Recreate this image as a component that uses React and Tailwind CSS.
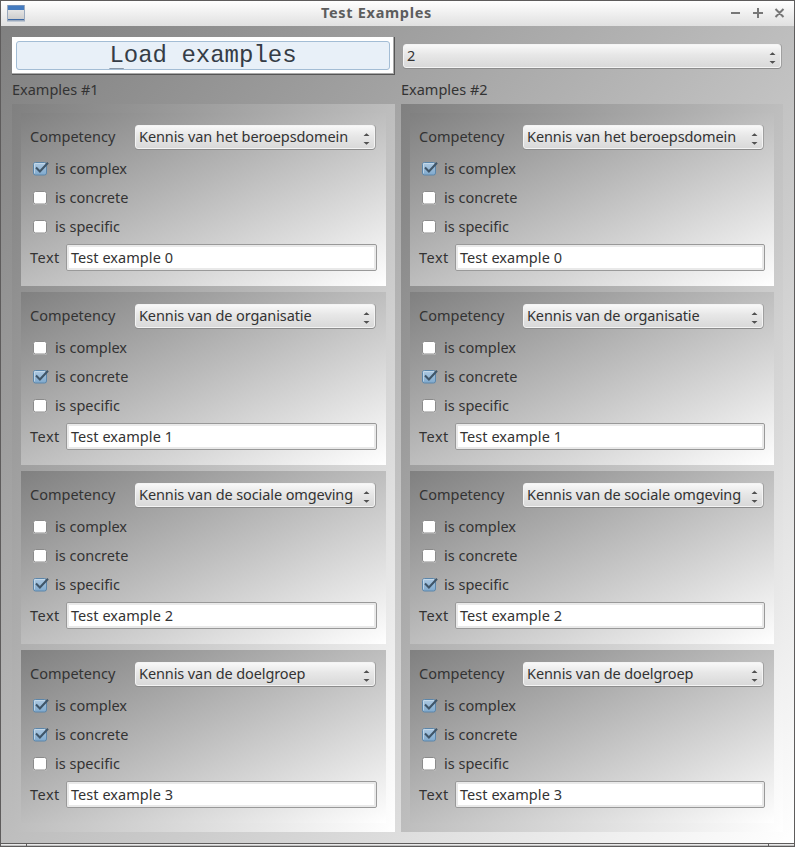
import React from "react";

const EXAMPLES = [
  { competency: "Kennis van het beroepsdomein", on: [true, false, false], spacing: "tracking-[-0.09px]" },
  { competency: "Kennis van de organisatie", on: [false, true, false], spacing: "tracking-[-0.11px]" },
  { competency: "Kennis van de sociale omgeving", on: [false, false, true], spacing: "tracking-[-0.1px]" },
  { competency: "Kennis van de doelgroep", on: [true, true, false], spacing: "tracking-[-0.1px]" },
];

function Arrows() {
  return (
    <svg width="7" height="12" viewBox="0 0 7 12" className="shrink-0">
      <path d="M0.5 3 3.5 0.2 6.5 3Z M0.5 9 3.5 11.8 6.5 9Z" fill="#505050" />
    </svg>
  );
}

function Select({ children, className }) {
  return (
    <div
      className={`flex h-6 items-center justify-between rounded-[3px] border border-[#f4f4f4] bg-linear-to-b from-[#f8f8f8] via-[#e7e7e7] via-45% to-[#d9d9d9] pl-[3px] pr-1 shadow-[0_1px_0_#8c8c8c,1px_0_0_#a0a0a0] ${className}`}
    >
      <span className="whitespace-nowrap pb-[2px]">{children}</span>
      <span className="mt-[4px] flex">
        <Arrows />
      </span>
    </div>
  );
}

function Check({ on }) {
  return (
    <svg width="18" height="16" viewBox="0 0 18 16" className="shrink-0">
      <defs>
        <linearGradient id="tick-fill" x1="0" y1="0" x2="0" y2="1">
          <stop offset="0" stopColor="#afcae2" />
          <stop offset="1" stopColor="#7fa9cd" />
        </linearGradient>
      </defs>
      {on ? (
        <>
          <rect x="1.5" y="1.5" width="13" height="12.5" rx="2" fill="url(#tick-fill)" stroke="#5c86aa" />
          <path d="M2.5 12.5V2.5H13" fill="none" stroke="#c9dceb" strokeWidth="0.8" />
          <path d="M4 6.6 7.9 10.4 16 1.8" fill="none" stroke="#3f5568" strokeWidth="2.1" />
        </>
      ) : (
        <>
          <rect x="1" y="2" width="14" height="13" rx="2" fill="#c4c4c4" />
          <rect x="1.5" y="1.5" width="13" height="12.5" rx="2" fill="#fff" stroke="#8b8b8b" />
        </>
      )}
    </svg>
  );
}

function Card({ example, index, selectWidth, inputWidth }) {
  return (
    <div className="h-[173px] bg-linear-to-br from-[#808080] to-white pt-[9px] pl-[9px]">
      <div className="flex h-[30px] items-center">
        <span className={`${selectWidth} shrink-0 pb-[2px]`}>Competency</span>
        <Select className={`w-[240px] ${example.spacing}`}>{example.competency}</Select>
      </div>
      <div className="mt-[2px]">
        {["is complex", "is concrete", "is specific"].map((label, i) => (
          <div key={label} className="flex h-[29px] items-center gap-[5px] pl-[2px]">
            <Check on={example.on[i]} />
            <span className="pb-[2px]">{label}</span>
          </div>
        ))}
      </div>
      <div className="flex h-[33px] items-center">
        <span className="w-9 shrink-0 pb-[2px] tracking-[0.5px]">Text</span>
        <div
          className={`${inputWidth} flex h-[27px] items-center rounded-[2px] border border-[#999] bg-white pb-[2px] pl-1 tracking-[0.05px] shadow-[inset_0_0_0_2px_#e9e9e9]`}
        >
          {`Test example ${index}`}
        </div>
      </div>
    </div>
  );
}

function Panel({ title, className, selectWidth, inputWidth }) {
  return (
    <section className={className}>
      <h2 className="flex h-[29px] items-center pb-[1px]">{title}</h2>
      <div className="flex h-[728px] flex-col gap-[6px] bg-linear-to-br from-[#808080] to-white p-[9px]">
        {EXAMPLES.map((example, i) => (
          <Card
            key={example.competency}
            example={example}
            index={i}
            selectWidth={selectWidth}
            inputWidth={inputWidth}
          />
        ))}
      </div>
    </section>
  );
}

export default function App() {
  return (
    <div className="flex h-[847px] w-[795px] flex-col overflow-hidden border border-[#5e5c5c] font-['Noto_Sans',sans-serif] text-[14.5px] leading-5 text-[#333]">
      <header className="flex h-[25px] shrink-0 items-center bg-linear-to-b from-white to-[#e0e0e0]">
        <svg width="18" height="17" viewBox="0 0 18 17" className="ml-[6px]">
          <defs>
            <linearGradient id="app-body" x1="0" y1="0" x2="0" y2="1">
              <stop offset="0" stopColor="#f0f0f0" />
              <stop offset="1" stopColor="#c8c8c8" />
            </linearGradient>
          </defs>
          <rect x="0.5" y="0.5" width="17" height="15.5" fill="url(#app-body)" stroke="#9aa9bd" />
          <rect x="1" y="0.5" width="16" height="4.5" fill="#447bc0" />
          <rect x="1" y="14" width="16" height="1.2" fill="#3c68a5" />
        </svg>
        <h1 className="flex-1 pr-[3px] pb-[3px] text-center text-[14.5px] font-bold tracking-[0.7px] text-[#5d5d5d]">
          Test Examples
        </h1>
        <svg width="54" height="12" viewBox="0 0 54 12" className="mr-[9px] mb-[2px]" stroke="#777" strokeWidth="2" fill="none">
          <path d="M0 6H9 M22 6H32 M27 1V11 M44.5 2 52.5 10 M52.5 2 44.5 10" />
        </svg>
      </header>
      <main className="h-[817px] shrink-0 bg-linear-to-br from-[#808080] to-white pl-[11px] pt-[11px]">
        <div className="flex h-[38px]">
          <button className="h-[38px] w-[383px] border-r border-b border-[#555] bg-white p-1 shadow-[inset_-1px_-1px_0_#aaa]">
            <span className="flex h-[29px] w-[374px] items-center justify-center rounded-[3px] border border-[#a3bdd5] bg-[#e8f0f8] font-['Liberation_Mono',monospace] text-[24px] leading-[29px] text-[#353c46]">
              <span>
                <span className="underline decoration-[#8a98a8] decoration-1 underline-offset-[6px]">L</span>oad examples
              </span>
            </span>
          </button>
          <Select className="mt-[7px] ml-2 w-[378px]">2</Select>
        </div>
        <div className="flex gap-[6px]">
          <Panel title="Examples #1" className="w-[383px]" selectWidth="w-[105px]" inputWidth="w-[311px]" />
          <Panel title="Examples #2" className="w-[382px]" selectWidth="w-[104px]" inputWidth="w-[310px]" />
        </div>
      </main>
      <footer className="flex h-[3px] shrink-0 border-t border-[#5e5c5c] bg-linear-to-b from-white to-[#aaa]">
        <div className="w-[26px] border-r border-[#5e5c5c]" />
        <div className="w-[742px] border-r border-[#5e5c5c]" />
      </footer>
    </div>
  );
}
